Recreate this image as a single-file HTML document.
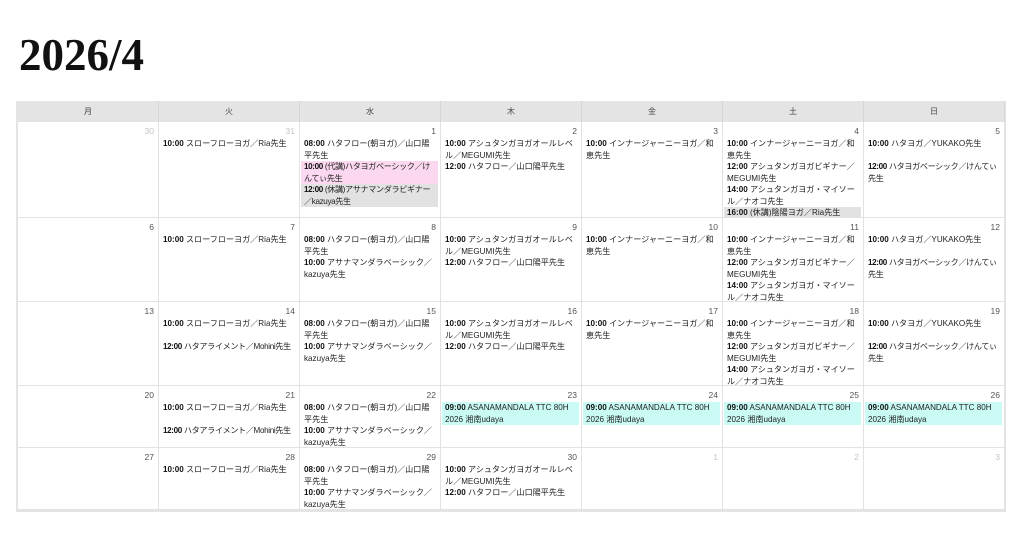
<!DOCTYPE html>
<html><head><meta charset="utf-8"><style>
body{margin:0;width:1022px;height:550px;background:#fff;font-family:"Liberation Sans","Noto Sans CJK JP",sans-serif;color:#222;position:relative;overflow:hidden}
h1{position:absolute;left:19px;top:30px;margin:0;font-family:"Liberation Serif",serif;font-weight:bold;font-size:45px;line-height:50px;color:#111}
.cal{position:absolute;left:16px;top:101px;width:990px;height:411px;background:#e4e4e4}
.grid{position:absolute;left:2px;top:0;display:grid;grid-template-columns:repeat(7,141px);grid-template-rows:21px 96px 84px 84px 62px 62px}
.h{font-size:8px;text-align:center;line-height:21px;color:#444;border-right:1px solid #d6d6d6}
.c{background:#fff;border-right:1px solid #e2e2e2;border-bottom:1px solid #e2e2e2;box-sizing:border-box;padding:3px 0 0 0;position:relative;overflow:hidden}
.d{text-align:right;font-size:8.5px;color:#555;line-height:12px;padding-right:4px;height:13px}
.o{color:#c4c4c4}
.e{font-size:8.1px;line-height:11.5px;padding:0 3px;margin:0 2px 0 1px;min-height:23px;box-sizing:border-box;white-space:nowrap;overflow:hidden}
.e b{font-weight:bold;color:#111}
.e.s{min-height:0}
.t{letter-spacing:-0.35px}
.pk{background:#fbd8ef}
.gy{background:#e2e2e2}
.cy{background:#c9fbf4}
</style></head><body>
<h1>2026/4</h1>
<div class="cal"><div class="grid">
<div class="h">月</div><div class="h">火</div><div class="h">水</div><div class="h">木</div><div class="h">金</div><div class="h">土</div><div class="h">日</div>

<div class="c"><div class="d o">30</div></div>
<div class="c"><div class="d o">31</div><div class="e"><b>10:00</b> スローフローヨガ／Ria先生</div></div>
<div class="c"><div class="d">1</div><div class="e s"><b>08:00</b> ハタフロー(朝ヨガ)／山口陽<br>平先生</div><div class="e s pk t"><b>10:00</b> (代講)ハタヨガベーシック／け<br>んてぃ先生</div><div class="e s gy t"><b>12:00</b> (休講)アサナマンダラビギナー<br>／kazuya先生</div></div>
<div class="c"><div class="d">2</div><div class="e s"><b>10:00</b> アシュタンガヨガオールレベ<br>ル／MEGUMI先生</div><div class="e s"><b>12:00</b> ハタフロー／山口陽平先生</div></div>
<div class="c"><div class="d">3</div><div class="e"><b>10:00</b> インナージャーニーヨガ／和<br>恵先生</div></div>
<div class="c"><div class="d">4</div><div class="e s"><b>10:00</b> インナージャーニーヨガ／和<br>恵先生</div><div class="e s"><b>12:00</b> アシュタンガヨガビギナー／<br>MEGUMI先生</div><div class="e s"><b>14:00</b> アシュタンガヨガ・マイソー<br>ル／ナオコ先生</div><div class="e s gy"><b>16:00</b> (休講)陰陽ヨガ／Ria先生</div></div>
<div class="c"><div class="d">5</div><div class="e"><b>10:00</b> ハタヨガ／YUKAKO先生</div><div class="e t"><b>12:00</b> ハタヨガベーシック／けんてぃ<br>先生</div></div>

<div class="c"><div class="d">6</div></div>
<div class="c"><div class="d">7</div><div class="e"><b>10:00</b> スローフローヨガ／Ria先生</div></div>
<div class="c"><div class="d">8</div><div class="e s"><b>08:00</b> ハタフロー(朝ヨガ)／山口陽<br>平先生</div><div class="e s"><b>10:00</b> アサナマンダラベーシック／<br>kazuya先生</div></div>
<div class="c"><div class="d">9</div><div class="e s"><b>10:00</b> アシュタンガヨガオールレベ<br>ル／MEGUMI先生</div><div class="e s"><b>12:00</b> ハタフロー／山口陽平先生</div></div>
<div class="c"><div class="d">10</div><div class="e"><b>10:00</b> インナージャーニーヨガ／和<br>恵先生</div></div>
<div class="c"><div class="d">11</div><div class="e s"><b>10:00</b> インナージャーニーヨガ／和<br>恵先生</div><div class="e s"><b>12:00</b> アシュタンガヨガビギナー／<br>MEGUMI先生</div><div class="e s"><b>14:00</b> アシュタンガヨガ・マイソー<br>ル／ナオコ先生</div></div>
<div class="c"><div class="d">12</div><div class="e"><b>10:00</b> ハタヨガ／YUKAKO先生</div><div class="e t"><b>12:00</b> ハタヨガベーシック／けんてぃ<br>先生</div></div>

<div class="c"><div class="d">13</div></div>
<div class="c"><div class="d">14</div><div class="e"><b>10:00</b> スローフローヨガ／Ria先生</div><div class="e t"><b>12:00</b> ハタアライメント／Mohini先生</div></div>
<div class="c"><div class="d">15</div><div class="e s"><b>08:00</b> ハタフロー(朝ヨガ)／山口陽<br>平先生</div><div class="e s"><b>10:00</b> アサナマンダラベーシック／<br>kazuya先生</div></div>
<div class="c"><div class="d">16</div><div class="e s"><b>10:00</b> アシュタンガヨガオールレベ<br>ル／MEGUMI先生</div><div class="e s"><b>12:00</b> ハタフロー／山口陽平先生</div></div>
<div class="c"><div class="d">17</div><div class="e"><b>10:00</b> インナージャーニーヨガ／和<br>恵先生</div></div>
<div class="c"><div class="d">18</div><div class="e s"><b>10:00</b> インナージャーニーヨガ／和<br>恵先生</div><div class="e s"><b>12:00</b> アシュタンガヨガビギナー／<br>MEGUMI先生</div><div class="e s"><b>14:00</b> アシュタンガヨガ・マイソー<br>ル／ナオコ先生</div></div>
<div class="c"><div class="d">19</div><div class="e"><b>10:00</b> ハタヨガ／YUKAKO先生</div><div class="e t"><b>12:00</b> ハタヨガベーシック／けんてぃ<br>先生</div></div>

<div class="c"><div class="d">20</div></div>
<div class="c"><div class="d">21</div><div class="e"><b>10:00</b> スローフローヨガ／Ria先生</div><div class="e t"><b>12:00</b> ハタアライメント／Mohini先生</div></div>
<div class="c"><div class="d">22</div><div class="e s"><b>08:00</b> ハタフロー(朝ヨガ)／山口陽<br>平先生</div><div class="e s"><b>10:00</b> アサナマンダラベーシック／<br>kazuya先生</div></div>
<div class="c"><div class="d">23</div><div class="e s cy"><b>09:00</b> ASANAMANDALA TTC 80H<br>2026 湘南udaya</div></div>
<div class="c"><div class="d">24</div><div class="e s cy"><b>09:00</b> ASANAMANDALA TTC 80H<br>2026 湘南udaya</div></div>
<div class="c"><div class="d">25</div><div class="e s cy"><b>09:00</b> ASANAMANDALA TTC 80H<br>2026 湘南udaya</div></div>
<div class="c"><div class="d">26</div><div class="e s cy"><b>09:00</b> ASANAMANDALA TTC 80H<br>2026 湘南udaya</div></div>

<div class="c"><div class="d">27</div></div>
<div class="c"><div class="d">28</div><div class="e"><b>10:00</b> スローフローヨガ／Ria先生</div></div>
<div class="c"><div class="d">29</div><div class="e s"><b>08:00</b> ハタフロー(朝ヨガ)／山口陽<br>平先生</div><div class="e s"><b>10:00</b> アサナマンダラベーシック／<br>kazuya先生</div></div>
<div class="c"><div class="d">30</div><div class="e s"><b>10:00</b> アシュタンガヨガオールレベ<br>ル／MEGUMI先生</div><div class="e s"><b>12:00</b> ハタフロー／山口陽平先生</div></div>
<div class="c"><div class="d o">1</div></div>
<div class="c"><div class="d o">2</div></div>
<div class="c"><div class="d o">3</div></div>
</div></div>
</body></html>
